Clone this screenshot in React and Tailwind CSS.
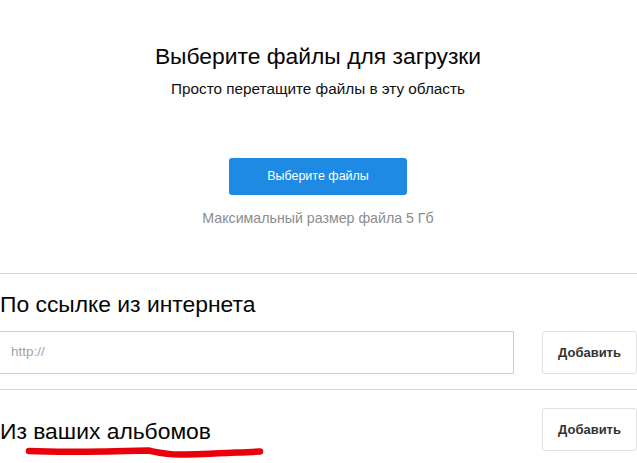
import React from "react";

function AddButton() {
  return (
    <button className="w-[95px] h-[43px] shrink-0 border border-[#e0e0e0] rounded-[3px] bg-white text-[13px] font-bold text-[#333] flex items-center justify-center">
      Добавить
    </button>
  );
}

export default function App() {
  return (
    <div className="w-[637px] h-[463px] overflow-hidden bg-white font-['Liberation_Sans',Arial,sans-serif] text-black flex flex-col">
      <div className="h-[273px] shrink-0 flex flex-col items-center pt-[42px] pr-[1px]">
        <h1 className="text-[22.85px] leading-[28px] font-normal text-[#050505]">Выберите файлы для загрузки</h1>
        <p className="text-[15.3px] leading-[20px] mt-[9px] text-[#111]">Просто перетащите файлы в эту область</p>
        <button className="mt-[59px] w-[178px] h-[37px] bg-[#1e8ae3] rounded-[3px] text-white text-[12.5px] flex items-center justify-center">
          Выберите файлы
        </button>
        <p className="mt-[14px] text-[14.2px] leading-[18px] text-[#8c8c8c]">Максимальный размер файла 5 Гб</p>
      </div>

      <section className="h-[116px] shrink-0 border-t border-[#d4d4d4] pt-[16px]">
        <h2 className="text-[22.85px] leading-[28px] font-normal text-[#050505]">По ссылке из интернета</h2>
        <div className="mt-[13px] flex items-stretch justify-between">
          <div className="w-[514px] h-[43px] border-y border-r border-[#cfcfcf] flex items-center pl-[11px] text-[13.5px] text-[#a3a3a3]">
            http://
          </div>
          <AddButton />
        </div>
      </section>

      <section className="relative flex-1 border-t border-[#d4d4d4] pt-[18px] flex items-start justify-between">
        <h2 className="text-[22.85px] leading-[28px] mt-[9px] font-normal text-[#050505]">Из ваших альбомов</h2>
        <AddButton />
        <svg className="absolute left-0 top-0 w-[637px] h-[74px] pointer-events-none" viewBox="0 389 637 74" fill="none">
          <path
            d="M29 450 C 60 451.5 95 451 148 449.5 C 156 451 165 453.5 180 453.5 C 205 453.5 235 451.5 260 450.5"
            stroke="#e8000b"
            strokeWidth="6.5"
            strokeLinecap="round"
          />
        </svg>
      </section>
    </div>
  );
}
